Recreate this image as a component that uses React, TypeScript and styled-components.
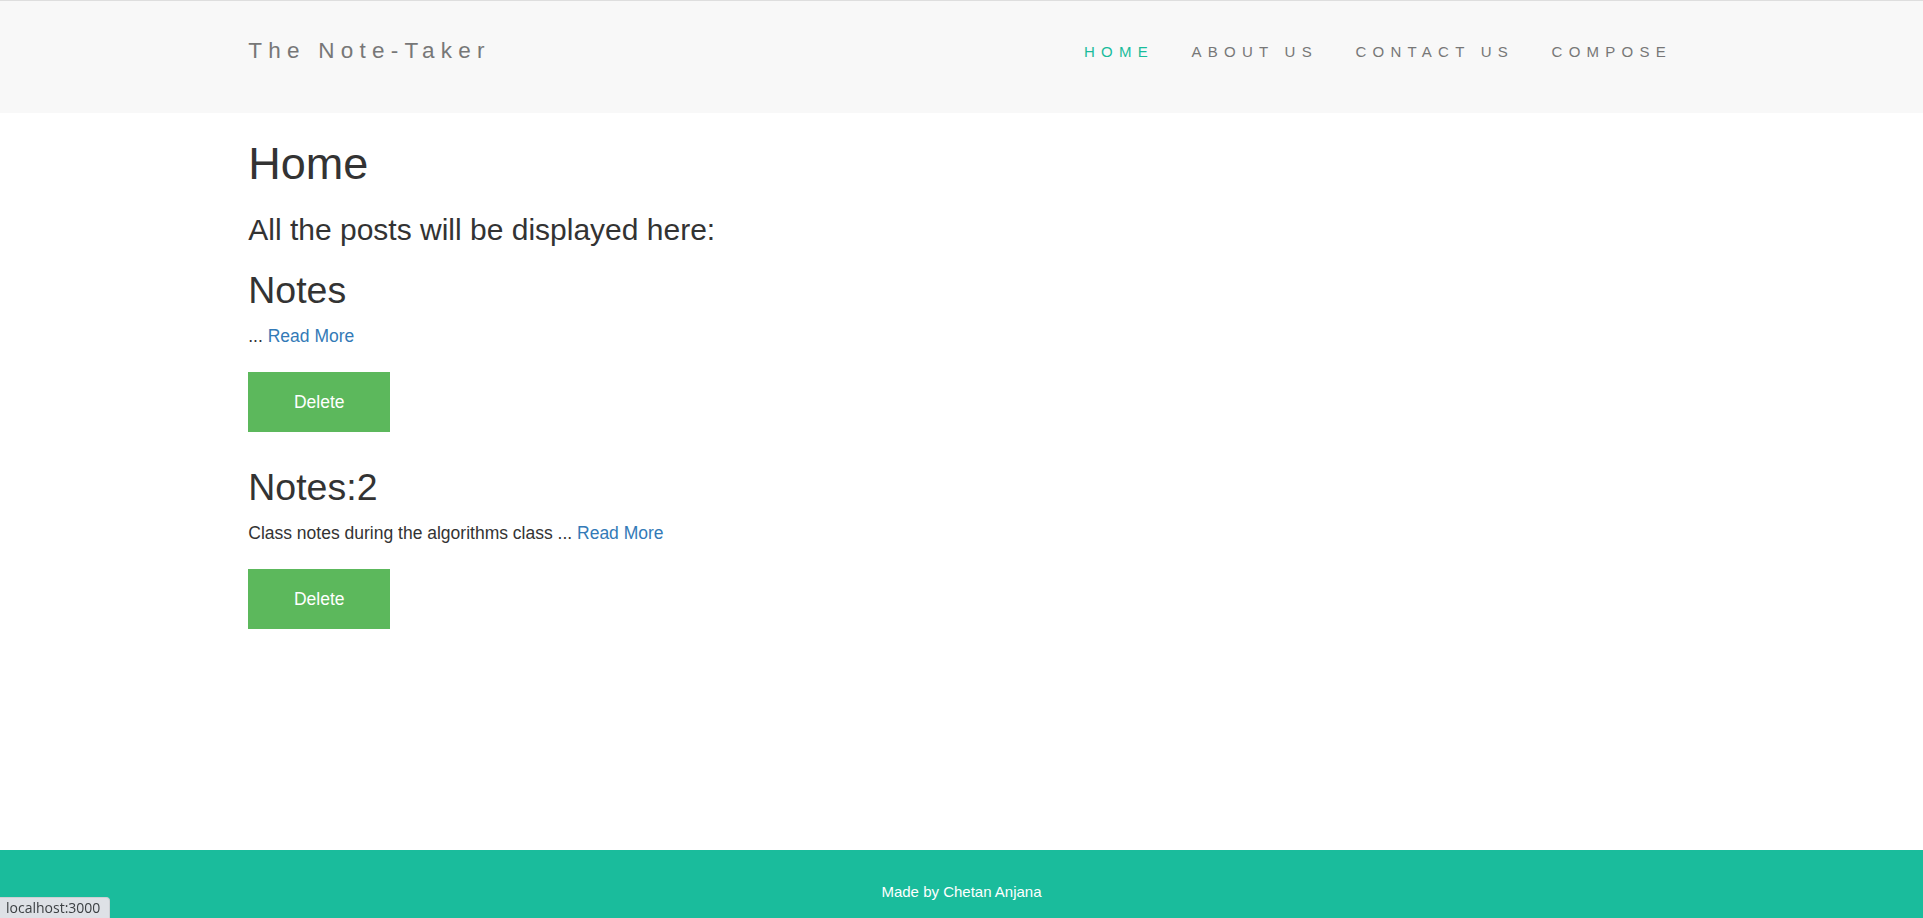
import React from "react";
import styled, { createGlobalStyle } from "styled-components";

const GlobalStyle = createGlobalStyle`
  html, body {
    margin: 0;
    padding: 0;
    background: #ffffff;
  }
  body {
    font-family: "Liberation Sans", Arial, Helvetica, sans-serif;
    font-size: 17.5px;
    line-height: 25px;
    color: #333333;
  }
  * { box-sizing: border-box; }
`;

const Page = styled.div`
  min-height: 100vh;
  display: flex;
  flex-direction: column;
`;

const NavBar = styled.header`
  height: 113px;
  background: #f8f8f8;
  border-top: 1px solid #dedede;
  padding-top: 37px;
`;

const Container = styled.div`
  width: 1464px;
  margin: 0 auto;
  padding: 0 18.75px;
`;

const NavInner = styled(Container)`
  display: flex;
  align-items: flex-start;
  justify-content: space-between;
`;

const Brand = styled.a`
  font-size: 22.5px;
  line-height: 25px;
  letter-spacing: 6.25px;
  color: #777777;
  text-decoration: none;
`;

const NavList = styled.ul`
  display: flex;
  list-style: none;
  margin: 1px -16px 0 0;
  padding: 0;
`;

const NavLink = styled.a<{ $active?: boolean }>`
  display: block;
  padding: 0 18.75px;
  font-size: 15px;
  line-height: 25px;
  letter-spacing: 6.25px;
  color: ${(p) => (p.$active ? "#1abc9c" : "#777777")};
  text-decoration: none;
`;

const Main = styled(Container)`
  flex: 1;
  padding-top: 26px;
`;

const Title = styled.h1`
  margin: 0 0 24px;
  font-size: 45px;
  line-height: 49.5px;
  font-weight: 500;
  color: #333333;
`;

const Subtitle = styled.h3`
  margin: 0 0 24.3px;
  font-size: 30px;
  line-height: 33px;
  font-weight: 500;
  color: #333333;
`;

const Posts = styled.div`
  display: flex;
  flex-direction: column;
  gap: 34.7px;
`;

const Post = styled.article`
  display: flex;
  flex-direction: column;
  align-items: flex-start;
`;

const PostTitle = styled.h2`
  margin: 0 0 13.25px;
  font-size: 37.5px;
  line-height: 41.25px;
  font-weight: 500;
  color: #333333;
`;

const Excerpt = styled.p`
  margin: 0 0 22.8px;
  font-size: 17.5px;
  line-height: 25px;
`;

const ReadMore = styled.a`
  color: #337ab7;
  text-decoration: none;
`;

const DeleteButton = styled.button`
  width: 142px;
  height: 60px;
  border: none;
  border-radius: 0;
  background: #5cb85c;
  color: #ffffff;
  font-family: "Liberation Sans", Arial, sans-serif;
  font-size: 17.5px;
  line-height: 25px;
  cursor: pointer;
`;

const Footer = styled.footer`
  height: 68px;
  background: #1abc9c;
  text-align: center;
  padding-top: 31.25px;
`;

const FooterText = styled.p`
  margin: 0;
  font-size: 15px;
  line-height: 21.4px;
  color: #ffffff;
`;

const StatusBubble = styled.div`
  position: fixed;
  left: 0;
  bottom: 0;
  height: 21px;
  width: 110px;
  padding: 0 6px;
  background: #dee1e6;
  border: 1px solid #cdd0d4;
  border-left: none;
  border-bottom: none;
  border-top-right-radius: 4px;
  font-family: "Open Sans", "Noto Sans", sans-serif;
  font-size: 14px;
  line-height: 20px;
  color: #3c4043;
  white-space: nowrap;
`;

const navItems = [
  { label: "HOME", active: true },
  { label: "ABOUT US" },
  { label: "CONTACT US" },
  { label: "COMPOSE" },
];

const posts = [
  { title: "Notes", excerpt: "" },
  { title: "Notes:2", excerpt: "Class notes during the algorithms class" },
];

export default function App() {
  return (
    <>
      <GlobalStyle />
      <Page>
        <NavBar>
          <NavInner>
            <Brand href="#">The Note-Taker</Brand>
            <NavList>
              {navItems.map((item) => (
                <li key={item.label}>
                  <NavLink href="#" $active={item.active}>
                    {item.label}
                  </NavLink>
                </li>
              ))}
            </NavList>
          </NavInner>
        </NavBar>
        <Main>
          <Title>Home</Title>
          <Subtitle>All the posts will be displayed here:</Subtitle>
          <Posts>
            {posts.map((post) => (
              <Post key={post.title}>
                <PostTitle>{post.title}</PostTitle>
                <Excerpt>
                  {post.excerpt ? `${post.excerpt} ` : ""}... <ReadMore href="#">Read More</ReadMore>
                </Excerpt>
                <DeleteButton type="button">Delete</DeleteButton>
              </Post>
            ))}
          </Posts>
        </Main>
        <Footer>
          <FooterText>Made by Chetan Anjana</FooterText>
        </Footer>
      </Page>
      <StatusBubble>localhost:3000</StatusBubble>
    </>
  );
}
